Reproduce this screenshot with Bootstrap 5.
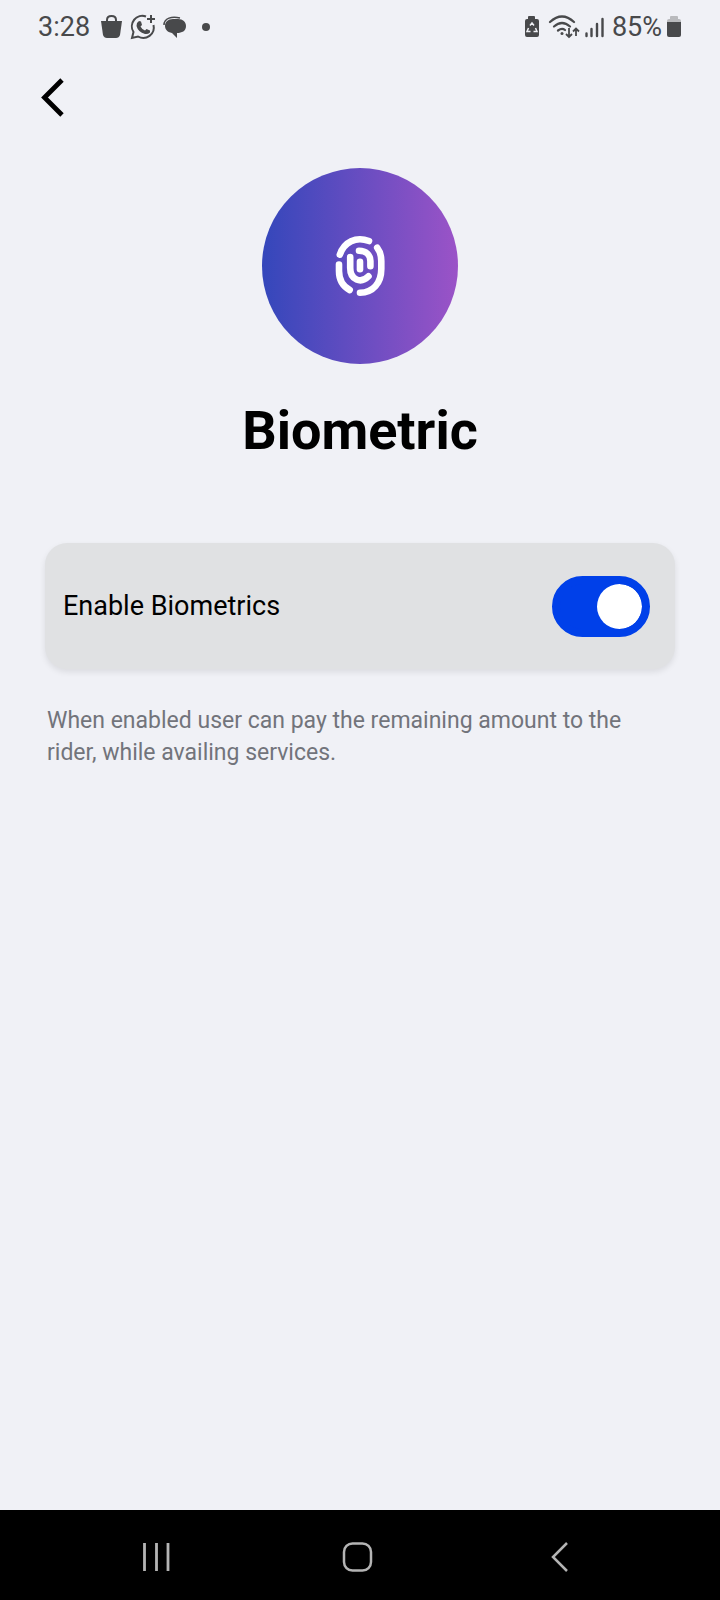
<!DOCTYPE html>
<html lang="en">
<head>
<meta charset="utf-8">
<meta name="viewport" content="width=device-width, initial-scale=1">
<title>Biometric</title>
<link href="https://cdn.jsdelivr.net/npm/bootstrap@5.3.0/dist/css/bootstrap.min.css" rel="stylesheet">
<style>
body{background:#f0f1f6;font-family:Roboto,sans-serif;color:#000}
svg{display:block;flex:none}
.status{height:54px;padding:0 38px;color:#48494b;font-size:27px;line-height:32px}
.top-bar{padding:16px 32px}
.icon-btn{border:0;padding:0;border-radius:8px}
.hero{width:196px;height:196px;background:linear-gradient(90deg,#3447bb,#9b53c7)}
.title{font-size:54px;line-height:64px;font-weight:700;margin:35px 0 80px}
.content{padding:26px 45px 0}
.setting{background:#e0e1e3;border-radius:22px;min-height:126px;padding:0 25px 0 18px;box-shadow:0 3px 6px rgba(0,0,0,.09)}
.setting label{font-size:27px;line-height:32px}
.toggle.form-check-input{width:98px;height:61px;margin:0;border:8px solid #0040e9;border-radius:31px;background-color:#0040e9;background-size:45px 45px;background-position:right center;background-origin:padding-box;
background-image:url("data:image/svg+xml,%3csvg xmlns='http://www.w3.org/2000/svg' viewBox='0 0 10 10'%3e%3ccircle r='5' cx='5' cy='5' fill='%23fff'/%3e%3c/svg%3e")!important}
.toggle.form-check-input:not(:checked){background-color:#8d929c;border-color:#8d929c;background-position:left center}
.hint{font-size:23px;line-height:32px;color:#72747b;margin:36px 2px}
.nav-keys{height:90px;background:#000;color:#b4b4b4;padding:4px 56px 0}
</style>
</head>
<body>
<div class="min-vh-100 d-flex flex-column">
  <header class="status d-flex align-items-center justify-content-between">
    <div class="d-flex align-items-center">
      <span>3:28</span>
      <svg class="ms-2" width="118" height="32" viewBox="0 0 118 32" fill="none" stroke="currentColor" role="img" aria-label="Notifications">
        <path d="M3 10h21l-2 14q-1 3-4 3H9q-3 0-4-3z" fill="currentColor" stroke="none"/>
        <path d="M9 11V9q0-4 4.500-4t4.500 4v2" stroke-width="2"/>
        <g transform="translate(1 0)">
        <path d="M47 5.500A10.500 10.500 0 0 0 34.500 21L33 27l6-1.500A10.500 10.500 0 0 0 54.500 14" stroke-width="2"/>
        <path d="M52 4v8M48 8h8" stroke-width="2"/>
        <path d="M38 12l2-2 2 .5 1 3.500-1.500 1.500q1.500 3 4.500 4l1.500-1.500 3.500 1.500v2q-2 2-5 1.500-7-2-8.500-8z" fill="currentColor" stroke="none"/>
        </g>
        <path d="M75 8h5c5 0 8 3 8 7 0 5-4 7-9 7v5l-5-5c-5-1-7-4-7-7 0-4 3-7 8-7z" fill="currentColor" stroke="none"/>
        <path d="M66 14c0-7 8-9 16-7" stroke-width="1.500"/>
        <circle cx="108" cy="16" r="4" fill="currentColor" stroke="none"/>
      </svg>
    </div>
    <div class="d-flex align-items-center">
      <svg class="me-2" width="80" height="32" viewBox="0 0 80 32" fill="none" stroke="currentColor" role="img" aria-label="Battery saver, Wi-Fi and signal">
        <path d="M4 6q0-1 1-1h5q1 0 1 1v2h2q2 0 2 2v14q0 2-2 2H3q-2 0-2-2V10q0-2 2-2h1z" fill="currentColor" stroke="none"/>
        <path d="M6 14.500L8 12l2 2.500M11.500 17l1.500 3.500h-3.500M6.500 20.500H3L4.500 17" stroke="#f0f1f6" stroke-width="1.500"/>
        <path d="M26 11q12-11 24 0M30 15.500q8-7 16 0M34 19.500q4-3 7-.5" stroke-width="2.200" stroke-linecap="round"/>
        <circle cx="38" cy="22.500" r="1.500" fill="currentColor" stroke="none"/>
        <path d="M45 17v8.500M42 23l3 3 3-3M52 25v-7M49 20.500l3-3 3 3" stroke-width="1.800"/>
        <path d="M62.500 22.500V25M67.500 18v7M73 13v12M78.500 8v17" stroke-width="2.400" stroke-linecap="round"/>
      </svg>
      <span class="me-1">85%</span>
      <svg width="16" height="32" viewBox="0 0 16 32" role="img" aria-label="Battery">
        <path d="M4 6q0-1 1-1h6q1 0 1 1v2h1q2 0 2 2v2H1v-2q0-2 2-2h1z" fill="#b9babd"/>
        <path d="M1 11h14v13q0 2-2 2H3q-2 0-2-2z" fill="currentColor"/>
      </svg>
    </div>
  </header>
  <div class="top-bar d-flex">
    <button type="button" class="btn icon-btn" aria-label="Back">
      <svg width="40" height="56" viewBox="0 0 40 56" fill="none" stroke="#000" stroke-width="4.800"><path d="M30 10L12.500 27.500 30 45"/></svg>
    </button>
  </div>
  <main class="content flex-grow-1">
    <div class="hero rounded-circle mx-auto d-flex align-items-center justify-content-center">
      <svg width="80" height="80" viewBox="0 1 80 80" fill="none" stroke="#fff" stroke-width="6.600" stroke-linecap="round" aria-hidden="true">
        <path d="M19.800 29.700C24 17 36 11 49 16"/>
        <path d="M57.200 22.700Q61.300 28 61.300 36V44C61.300 58 53 67.700 40 67.700"/>
        <path d="M19 39.500V46C19 54 22.500 61 29.700 65"/>
        <path d="M30.200 32V43C30.200 55 41 59 48.500 51.300"/>
        <path d="M39 25.700C46 25.700 50.400 30 50.400 36V41.300"/>
        <path d="M40 36.800V44.200"/>
      </svg>
    </div>
    <h1 class="title text-center">Biometric</h1>
    <div class="setting d-flex align-items-center justify-content-between">
      <label for="bio">Enable Biometrics</label>
      <div class="form-switch p-0 m-0"><input class="form-check-input toggle float-none d-block" type="checkbox" role="switch" id="bio" checked aria-describedby="bio-hint"></div>
    </div>
    <p class="hint" id="bio-hint">When enabled user can pay the remaining amount to the rider, while availing services.</p>
  </main>
  <nav class="nav-keys d-flex align-items-center justify-content-between" aria-label="System">
    <button type="button" class="btn icon-btn" aria-label="Recent apps"><svg width="200" height="48" viewBox="0 0 200 48" fill="none" stroke="#b4b4b4" stroke-width="2.800"><path d="M88.500 10v28M100.500 10v28M112 10v28"/></svg></button>
    <button type="button" class="btn icon-btn" aria-label="Home"><svg width="200" height="48" viewBox="0 0 200 48" fill="none" stroke="#b4b4b4" stroke-width="2.500"><rect x="84" y="10.500" width="27" height="27" rx="8.500"/></svg></button>
    <button type="button" class="btn icon-btn" aria-label="Back"><svg width="200" height="48" viewBox="0 0 200 48" fill="none" stroke="#b4b4b4" stroke-width="2.500"><path d="M103 10L89 24l14 14"/></svg></button>
  </nav>
</div>
<script src="https://cdn.jsdelivr.net/npm/bootstrap@5.3.0/dist/js/bootstrap.bundle.min.js"></script>
</body>
</html>
